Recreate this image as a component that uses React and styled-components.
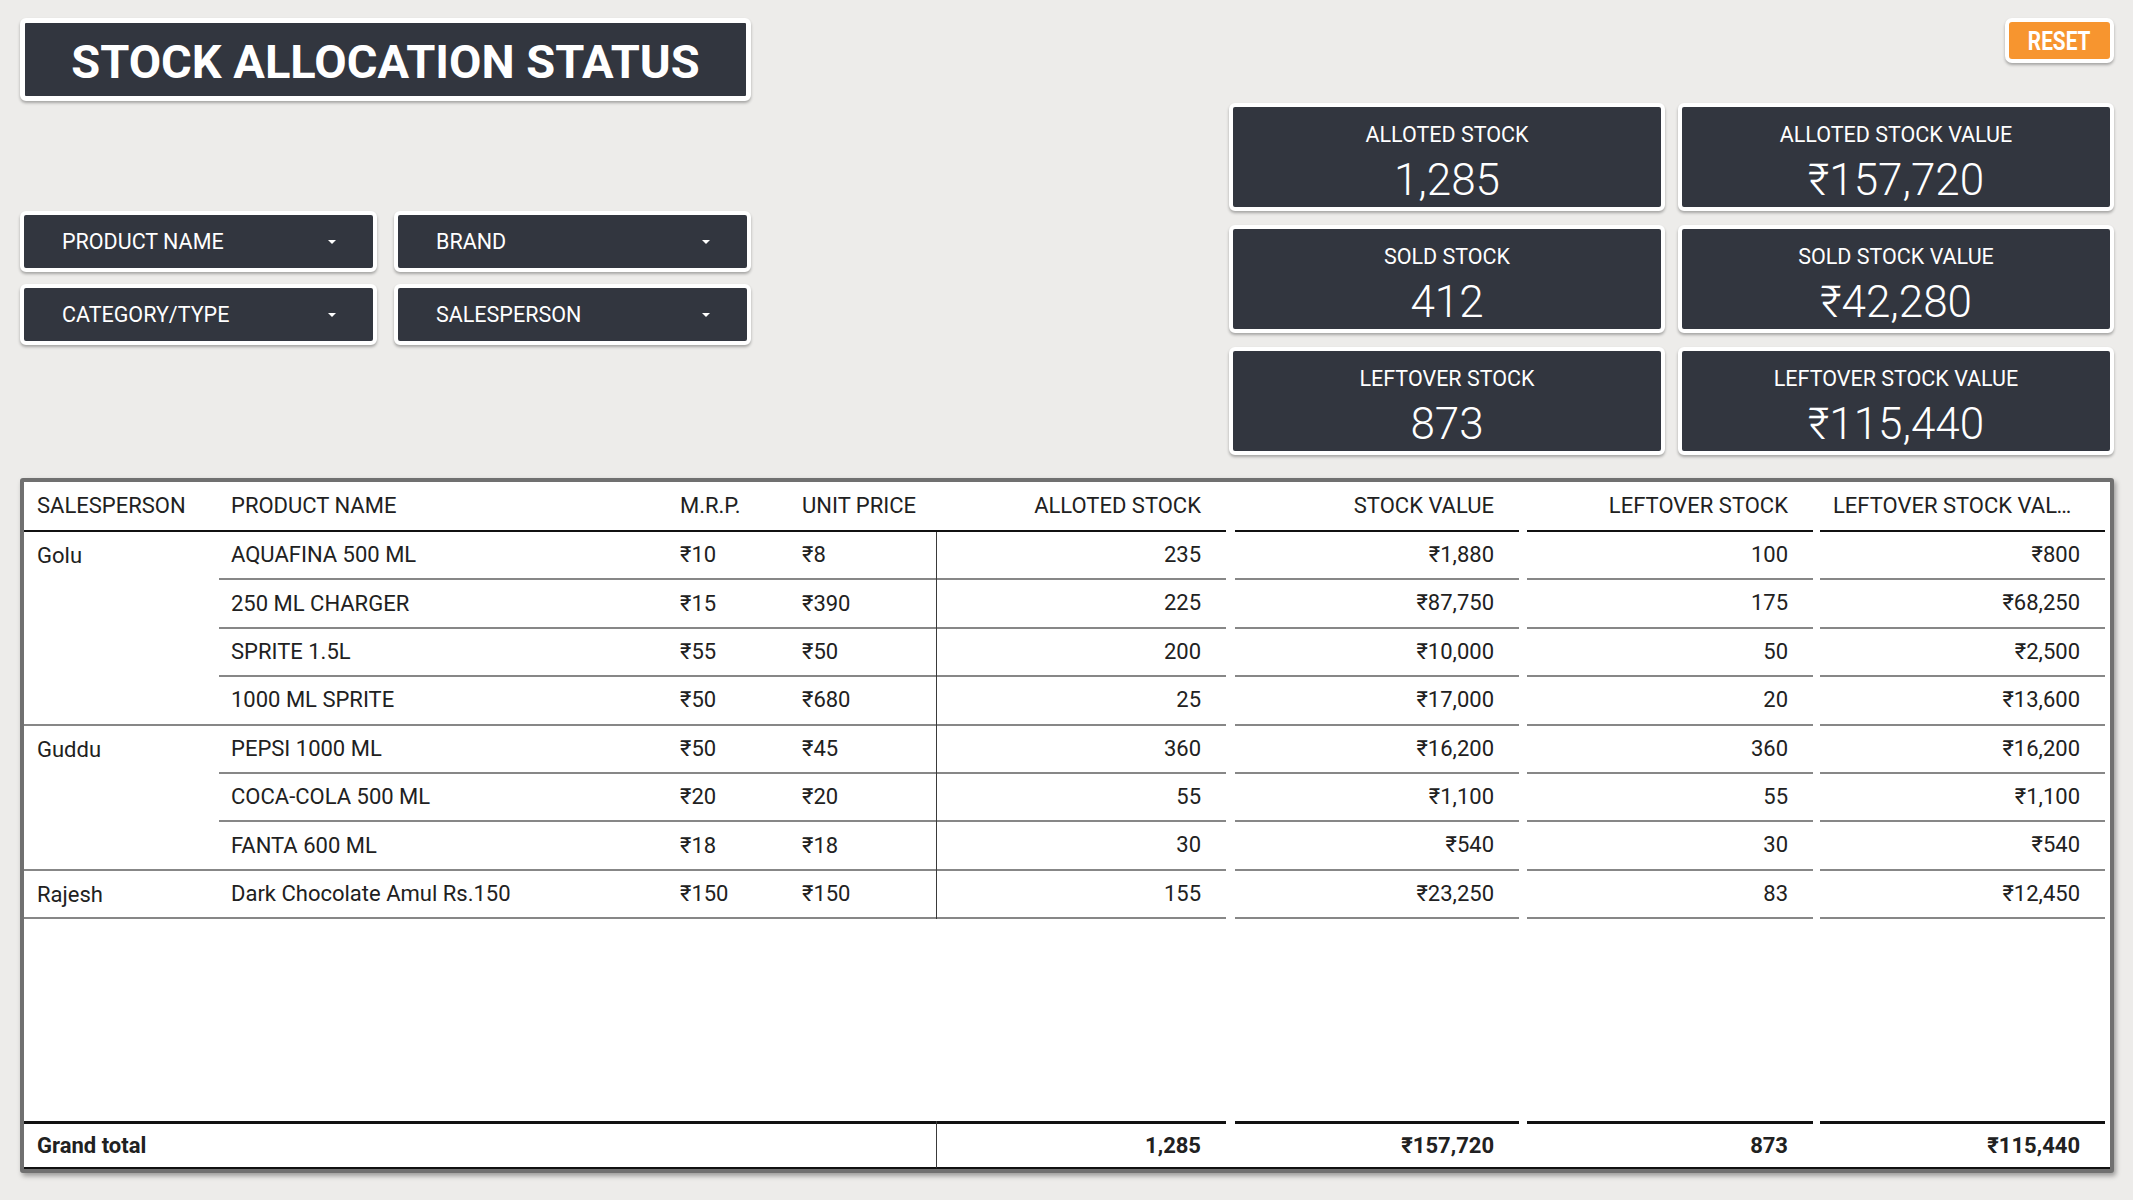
import React from 'react';
import styled, { createGlobalStyle } from 'styled-components';

const GlobalStyle = createGlobalStyle`
  html, body {
    margin: 0;
    padding: 0;
    background: #edecea;
  }
  body {
    font-family: Roboto, "Noto Sans", "Liberation Sans", sans-serif;
  }
  * {
    box-sizing: border-box;
  }
`;

const DARK = '#32363f';
const ROW_LINE = '#878787';

const Page = styled.div`
  width: 2133px;
  min-height: 1200px;
  padding: 18px 19px 20px 20px;
  background: #edecea;
`;

const Top = styled.div`
  display: flex;
  justify-content: space-between;
  align-items: flex-start;
`;

const LeftCol = styled.div`
  width: 731px;
  display: flex;
  flex-direction: column;
`;

const Title = styled.h1`
  margin: 0;
  height: 83px;
  padding-top: 4px;
  border: 5px solid #fff;
  border-radius: 6px;
  background: ${DARK};
  color: #fff;
  font-size: 47px;
  font-weight: 700;
  display: flex;
  align-items: center;
  justify-content: center;
  box-shadow: 0 2px 3px rgba(0, 0, 0, 0.3);
`;

const FilterGrid = styled.div`
  margin-top: 110px;
  display: grid;
  grid-template-columns: 1fr 1fr;
  column-gap: 17px;
  row-gap: 12px;
`;

const Filter = styled.div`
  height: 61px;
  border: 4px solid #fff;
  border-radius: 6px;
  background: ${DARK};
  color: #fff;
  font-size: 21.5px;
  padding: 0 37px 0 38px;
  display: flex;
  align-items: center;
  justify-content: space-between;
  box-shadow: 0 2px 3px rgba(0, 0, 0, 0.3);
`;

const Caret = styled.span`
  width: 0;
  height: 0;
  border-left: 4px solid transparent;
  border-right: 4px solid transparent;
  border-top: 4px solid #fff;
`;

const RightCol = styled.div`
  width: 885px;
  display: flex;
  flex-direction: column;
  align-items: flex-end;
`;

const Reset = styled.button`
  width: 109px;
  height: 45px;
  border: 4px solid #fff;
  border-radius: 7px;
  background: #f7952f;
  color: #fff;
  font-family: Roboto, "Noto Sans", sans-serif;
  font-size: 26px;
  font-weight: 700;
  padding: 0;
  display: flex;
  align-items: center;
  justify-content: center;
  box-shadow: 0 2px 3px rgba(0, 0, 0, 0.3);
  cursor: pointer;
`;

const ResetText = styled.span`
  display: inline-block;
  transform: scaleX(0.8);
`;

const KpiGrid = styled.div`
  margin-top: 40px;
  width: 100%;
  display: grid;
  grid-template-columns: 1fr 1fr;
  column-gap: 13px;
  row-gap: 14px;
`;

const Kpi = styled.div`
  height: 108px;
  border: 4px solid #fff;
  border-radius: 6px;
  background: ${DARK};
  color: #fff;
  padding-top: 15px;
  display: flex;
  flex-direction: column;
  align-items: center;
  box-shadow: 0 2px 3px rgba(0, 0, 0, 0.3);
`;

const KpiLabel = styled.div`
  font-size: 21.5px;
  line-height: 26px;
`;

const KpiValue = styled.div`
  margin-top: 7px;
  font-size: 44px;
  font-weight: 300;
  line-height: 50px;
`;

const TableBox = styled.div`
  margin-top: 23px;
  border: 4px solid #707070;
  border-radius: 3px;
  background: #fff;
  box-shadow: 2px 3px 5px rgba(0, 0, 0, 0.35);
`;

const Table = styled.table`
  width: 100%;
  table-layout: fixed;
  border-collapse: separate;
  border-spacing: 0;
  font-size: 22px;
  color: #212121;
`;

const Col = styled.col`
  width: ${(p) => p.$w}px;
`;

const TextCell = styled.td`
  padding: 0 0 0 ${(p) => p.$pad}px;
  line-height: 26px;
  vertical-align: middle;
  white-space: nowrap;
  border-bottom: 2px solid ${(p) => (p.$head ? '#111' : ROW_LINE)};
`;

const NameCell = styled.td`
  padding: 11px 0 0 13px;
  line-height: 26px;
  vertical-align: top;
  border-bottom: 2px solid ${ROW_LINE};
`;

const NumCell = styled.td`
  padding: 0;
  border-left: ${(p) => (p.$divider ? '1px solid #3a3a3a' : 'none')};
  border-bottom: ${(p) => (p.$total ? '2px solid #111' : 'none')};
`;

const NumInner = styled.div`
  height: ${(p) => (p.$total ? 46 : p.$head ? 50 : 48.4)}px;
  line-height: ${(p) => (p.$total ? 43 : p.$head ? 48 : 46.4)}px;
  margin: 0 ${(p) => p.$mr}px 0 ${(p) => p.$ml}px;
  padding: 0 25px 0 13px;
  text-align: right;
  white-space: nowrap;
  overflow: hidden;
  text-overflow: ellipsis;
  font-weight: ${(p) => (p.$total ? 700 : 400)};
  border-bottom: ${(p) => (p.$total ? 'none' : `2px solid ${p.$head ? '#111' : ROW_LINE}`)};
  border-top: ${(p) => (p.$total ? '3px solid #111' : 'none')};
`;

const FillCell = styled.td`
  height: 202px;
  padding: 0;
`;

const TotalCell = styled.td`
  padding: 0 0 0 13px;
  font-weight: 700;
  line-height: 26px;
  border-top: 3px solid #111;
  border-bottom: 2px solid #111;
`;

const widths = [195, 449, 122, 146, 294, 293, 293, 294];
const margins = [
  [0, 4],
  [5, 4],
  [4, 3],
  [4, 5],
];

const groups = [
  {
    name: 'Golu',
    items: [
      ['AQUAFINA 500 ML', '₹10', '₹8', '235', '₹1,880', '100', '₹800'],
      ['250 ML CHARGER', '₹15', '₹390', '225', '₹87,750', '175', '₹68,250'],
      ['SPRITE 1.5L', '₹55', '₹50', '200', '₹10,000', '50', '₹2,500'],
      ['1000 ML SPRITE', '₹50', '₹680', '25', '₹17,000', '20', '₹13,600'],
    ],
  },
  {
    name: 'Guddu',
    items: [
      ['PEPSI 1000 ML', '₹50', '₹45', '360', '₹16,200', '360', '₹16,200'],
      ['COCA-COLA 500 ML', '₹20', '₹20', '55', '₹1,100', '55', '₹1,100'],
      ['FANTA 600 ML', '₹18', '₹18', '30', '₹540', '30', '₹540'],
    ],
  },
  {
    name: 'Rajesh',
    items: [['Dark Chocolate Amul Rs.150', '₹150', '₹150', '155', '₹23,250', '83', '₹12,450']],
  },
];

const kpis = [
  ['ALLOTED STOCK', '1,285'],
  ['ALLOTED STOCK VALUE', '₹157,720'],
  ['SOLD STOCK', '412'],
  ['SOLD STOCK VALUE', '₹42,280'],
  ['LEFTOVER STOCK', '873'],
  ['LEFTOVER STOCK VALUE', '₹115,440'],
];

const numHeads = ['ALLOTED STOCK', 'STOCK VALUE', 'LEFTOVER STOCK', 'LEFTOVER STOCK VALUE'];
const totals = ['1,285', '₹157,720', '873', '₹115,440'];

function App() {
  return (
    <Page>
      <GlobalStyle />
      <Top>
        <LeftCol>
          <Title>STOCK ALLOCATION STATUS</Title>
          <FilterGrid>
            {['PRODUCT NAME', 'BRAND', 'CATEGORY/TYPE', 'SALESPERSON'].map((f) => (
              <Filter key={f}>
                <span>{f}</span>
                <Caret />
              </Filter>
            ))}
          </FilterGrid>
        </LeftCol>
        <RightCol>
          <Reset>
            <ResetText>RESET</ResetText>
          </Reset>
          <KpiGrid>
            {kpis.map(([label, value]) => (
              <Kpi key={label}>
                <KpiLabel>{label}</KpiLabel>
                <KpiValue>{value}</KpiValue>
              </Kpi>
            ))}
          </KpiGrid>
        </RightCol>
      </Top>

      <TableBox>
        <Table>
          <colgroup>
            {widths.map((w, i) => (
              <Col key={i} $w={w} />
            ))}
          </colgroup>
          <thead>
            <tr>
              <TextCell $head $pad={13}>SALESPERSON</TextCell>
              <TextCell $head $pad={12}>PRODUCT NAME</TextCell>
              <TextCell $head $pad={12}>M.R.P.</TextCell>
              <TextCell $head $pad={12}>UNIT PRICE</TextCell>
              {numHeads.map((h, i) => (
                <NumCell key={h}>
                  <NumInner $head $ml={margins[i][0]} $mr={margins[i][1]}>
                    {h}
                  </NumInner>
                </NumCell>
              ))}
            </tr>
          </thead>
          <tbody>
            {groups.map((g) =>
              g.items.map((it, r) => (
                <tr key={g.name + r}>
                  {r === 0 && <NameCell rowSpan={g.items.length}>{g.name}</NameCell>}
                  <TextCell $pad={12}>{it[0]}</TextCell>
                  <TextCell $pad={12}>{it[1]}</TextCell>
                  <TextCell $pad={12}>{it[2]}</TextCell>
                  {it.slice(3).map((v, i) => (
                    <NumCell key={i} $divider={i === 0}>
                      <NumInner $ml={margins[i][0]} $mr={margins[i][1]}>
                        {v}
                      </NumInner>
                    </NumCell>
                  ))}
                </tr>
              ))
            )}
            <tr>
              <FillCell colSpan={8} />
            </tr>
            <tr>
              <TotalCell colSpan={4}>Grand total</TotalCell>
              {totals.map((v, i) => (
                <NumCell key={i} $divider={i === 0} $total>
                  <NumInner $total $ml={margins[i][0]} $mr={margins[i][1]}>
                    {v}
                  </NumInner>
                </NumCell>
              ))}
            </tr>
          </tbody>
        </Table>
      </TableBox>
    </Page>
  );
}

export default App;
